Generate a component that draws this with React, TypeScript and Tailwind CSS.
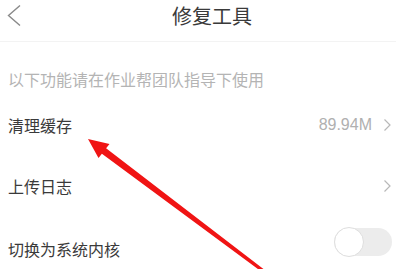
export default function App() {
  const font = { fontFamily: '"Noto Sans CJK SC", "Liberation Sans", sans-serif' }

  return (
    <div className="relative w-[396px] h-[269px] overflow-hidden bg-white" style={font}>
      {/* Header */}
      <div className="flex h-[42px] border-b border-[#f3f3f3]">
        <div className="w-[28px] pl-[7px] pt-[5px]">
          <svg width="14" height="21" viewBox="0 0 14 21" fill="none">
            <polyline points="13,0.5 1.5,10.5 13,20.5" stroke="#8a8a8a" strokeWidth="1.4" />
          </svg>
        </div>
        <div className="flex-1 pt-[6px] text-center text-[20px] leading-[20px] text-[#3a3a3a]">修复工具</div>
      </div>

      {/* Hint */}
      <div className="h-[60px] pl-[8px] pt-[28px] text-[16px] leading-[18px] text-[#b4b4b4]">
        以下功能请在作业帮团队指导下使用
      </div>

      {/* Rows */}
      <div className="flex h-[46px] items-center pl-[8px] pr-[5px] text-[16px] text-[#3a3a3a]">
        <span className="flex-1">清理缓存</span>
        <span className="mr-[12px] text-[#b0b0b0]" style={{ fontFamily: '"Liberation Sans", sans-serif' }}>89.94M</span>
        <Chevron />
      </div>
      <div className="flex h-[76px] items-center pl-[8px] pr-[5px] text-[16px] text-[#3a3a3a]">
        <span className="flex-1">上传日志</span>
        <Chevron />
      </div>
      <div className="flex h-[50px] items-center pl-[8px] pr-[4px] text-[16px] text-[#3a3a3a]">
        <span className="flex-1">切换为系统内核</span>
        <div className="mb-[14px] flex h-[28px] w-[58px] items-center rounded-full bg-[#ececec]">
          <div className="h-[30px] w-[30px] rounded-full border border-[#dedede] bg-white" />
        </div>
      </div>

      {/* Annotation arrow */}
      <svg className="pointer-events-none absolute left-0 top-0" width="396" height="269" viewBox="0 0 396 269">
        <polygon
          points="88,139 109.5,144 106.1,148.2 271,274.8 269,277.2 101.9,153.8 98.5,158"
          fill="#f01414"
        />
      </svg>
    </div>
  )
}

function Chevron() {
  return (
    <svg width="7" height="12" viewBox="0 0 7 12" fill="none">
      <polyline points="0.5,0.5 6,6 0.5,11.5" stroke="#b8b8b8" strokeWidth="1.2" />
    </svg>
  )
}
